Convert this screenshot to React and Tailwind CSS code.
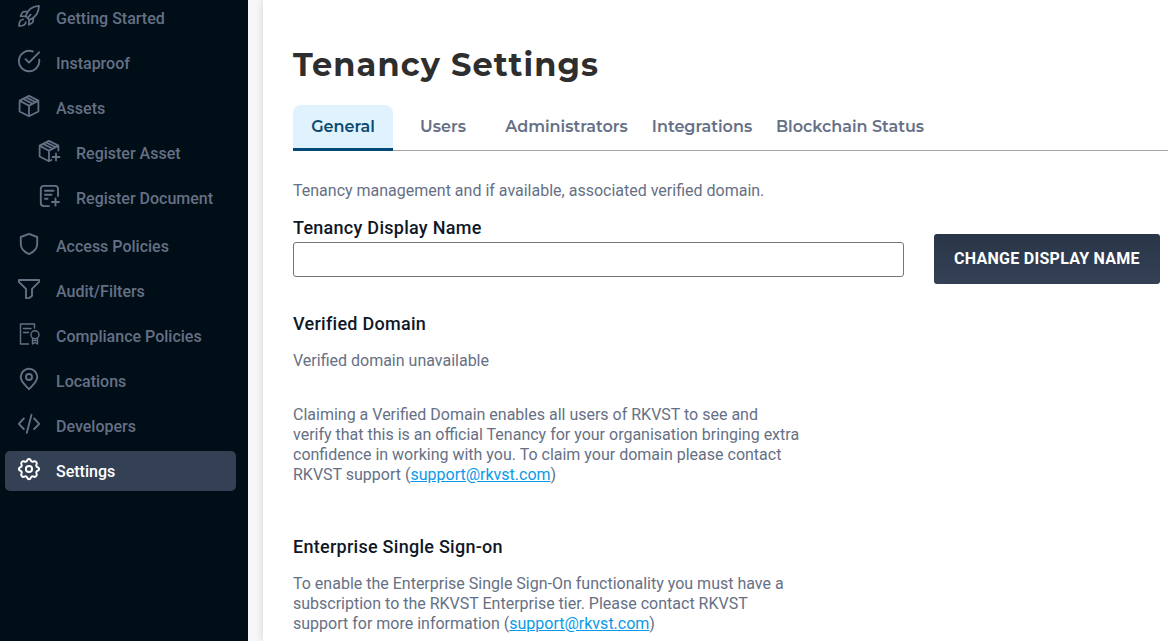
import React from "react";

function Icon({ children, width = "1.9" }) {
  return (
    <svg viewBox="0 0 24 24" className="-mt-1.5 size-6 shrink-0" fill="none" stroke="currentColor" strokeWidth={width} strokeLinecap="round" strokeLinejoin="round">
      {children}
    </svg>
  );
}

const icons = {
  rocket: (
    <Icon width="1.7">
      <path d="M8.6 12.2C10.2 6.8 14.5 2.4 22 1.900c-.3 7.600-4.200 12.100-9.500 13.900z" />
      <path d="M10.500 7.700H7.200c-1 0-1.700.4-2.200 1.300l-1.500 3.200 5.100.2M16.200 13.500v3.300c0 1-.4 1.700-1.300 2.200l-3.100 1.800.4-4.900" />
      <path d="M6.200 15.500c-2.700-.3-4.200 2.500-4.200 6.500 4.100 0 7.100-1.200 6.700-4M10.500 13.800l3.200-3.200" />
    </Icon>
  ),
  check: (
    <Icon>
      <path d="M22 3.300L12 13.600l-3.400-3.400M22.200 10.600A10.200 10.200 0 1 1 15.800 2.500" />
    </Icon>
  ),
  box: (
    <Icon width="1.8">
      <path d="M12 1.900l9.400 4.700v10.900L12 22.200 2.600 17.500V6.600zM2.600 6.600L12 11.700l9.400-5.100M12 11.700v10.500M6.100 4.900l9.500 4.900M9.100 3.400l9.500 4.800" />
    </Icon>
  ),
  boxPlus: (
    <Icon width="1.8">
      <path d="M21.400 11.500V6.600L12 1.900 2.600 6.600v10.900l9.400 4.700 2.400-1.200M2.600 6.600L12 11.700l9.400-5.100M12 11.700v10.500M6.100 4.900l9.500 4.900M9.100 3.400l9.500 4.800M19 14.500v7M15.500 18h7" />
    </Icon>
  ),
  docPlus: (
    <Icon>
      <path d="M21 12V4.900c0-2-1-3-3-3H7c-2 0-3.200 1-3.200 3v14.200c0 2 1.200 3 3.200 3h5M8 6.700h8.500M8 10.700h6.500M8 14.700h2.500M18.500 14.500v7M15 18h7" />
    </Icon>
  ),
  shield: (
    <Icon>
      <path d="M3.800 5L12 1.900 20.200 5v7c0 4.800-3.400 8-8.200 10.100C7.200 20 3.800 16.800 3.800 12z" />
    </Icon>
  ),
  filter: (
    <Icon>
      <path d="M1.900 3h20.200v1.900L15 11.900v6.900l-2.600 2.100-3.400.2v-9.200L1.900 4.900z" />
    </Icon>
  ),
  compliance: (
    <Icon width="1.400">
      <path d="M17.500 6V2h-14v20h8M6.500 6.500h7.500M6.500 10.500h5M15.500 16.800V22l2.500-1.500 2.500 1.500v-5.200M15.500 18.500h5" />
      <circle cx="18" cy="12.800" r="4" />
    </Icon>
  ),
  pin: (
    <Icon>
      <path d="M20.300 10.100c0 4.900-5.300 8.600-8.300 12.100-3-3.500-8.300-7.200-8.300-12.100a8.300 8.300 0 0 1 16.600 0z" />
      <circle cx="12" cy="10" r="3" />
    </Icon>
  ),
  code: (
    <Icon>
      <path d="M6.800 6.500L1.800 11.800l5 5.200M17.200 6.500l5 5.300-5 5.200M14.500 2.800l-4.700 18" />
    </Icon>
  ),
  gear: (
    <Icon width="2">
      <circle cx="12" cy="12" r="3.100" />
      <path d="M10.200 3.400c.7-2 2.900-2 3.600 0 .4 1.200 1.600 1.700 2.700 1.100 1.900-1 4.100 1 3 3.100-.6 1.100-.1 2.300 1.100 2.700 2 .7 2 2.800 0 3.500-1.200.4-1.700 1.600-1.100 2.700 1.100 2-.9 4.100-3 3.100-1.100-.6-2.300-.1-2.700 1.100-.7 2-2.900 2-3.600 0-.4-1.200-1.600-1.700-2.700-1.100-2 1-4.100-1.100-3-3.100.6-1.100.1-2.300-1.100-2.700-2-.7-2-2.800 0-3.500 1.200-.4 1.700-1.600 1.100-2.700-1.100-2.100 1.100-4.100 3-3.100 1.100.6 2.300.1 2.700-1.100z" />
    </Icon>
  ),
};

const nav = [
  { label: "Getting Started", icon: "rocket" },
  { label: "Instaproof", icon: "check" },
  { label: "Assets", icon: "box" },
  { label: "Register Asset", icon: "boxPlus", sub: true },
  { label: "Register Document", icon: "docPlus", sub: true },
  { label: "Access Policies", icon: "shield", gap: true },
  { label: "Audit/Filters", icon: "filter" },
  { label: "Compliance Policies", icon: "compliance" },
  { label: "Locations", icon: "pin" },
  { label: "Developers", icon: "code" },
  { label: "Settings", icon: "gear", active: true },
];

function NavItem({ item }) {
  return (
    <a
      className={`flex h-10 shrink-0 items-center gap-[15px] rounded-[5px] pt-0.5 font-medium ${item.sub ? "pl-8" : "pl-3"} ${item.gap ? "mt-[3px]" : ""} ${item.active ? "bg-[#344054] text-white" : "text-[#667085]"}`}
    >
      {icons[item.icon]}
      <span>{item.label}</span>
    </a>
  );
}

function Sidebar() {
  return (
    <nav className="-mt-0.5 flex w-[248px] shrink-0 flex-col gap-[5px] bg-[#000e18] pr-3 pl-[5px] text-base leading-5">
      {nav.map((item) => (
        <NavItem key={item.label} item={item} />
      ))}
    </nav>
  );
}

const tabs = [
  { label: "General", width: "w-[100px]", active: true },
  { label: "Users", width: "w-[100px]" },
  { label: "Administrators", width: "w-[147px]" },
  { label: "Integrations", width: "w-[124px]" },
  { label: "Blockchain Status", width: "w-[172px]" },
];

function Tabs() {
  return (
    <div className="flex h-[46px] border-b border-[#a3a3a3]">
      {tabs.map((tab) => (
        <button
          key={tab.label}
          className={`flex h-[46px] shrink-0 items-center justify-center border-b-3 font-['Montserrat','Inter',sans-serif] text-base font-semibold whitespace-nowrap ${tab.width} ${tab.active ? "rounded-t-lg border-[#004a75] bg-[#e0f2fe] text-[#0b4a6f]" : "border-transparent text-[#667085]"}`}
        >
          {tab.label}
        </button>
      ))}
    </div>
  );
}

function SupportLink() {
  return <a className="text-[#0b9ae8] underline">support@rkvst.com</a>;
}

export default function App() {
  return (
    <div className="flex h-[641px] w-[1168px] overflow-hidden bg-[#f7f7f9] font-['Roboto',sans-serif] text-base leading-5 text-[#667085]">
      <Sidebar />
      <main className="ml-[15px] flex min-w-0 flex-1 flex-col bg-white pl-[30px] shadow-[0_0_8px_rgba(0,0,0,0.15)]">
        <h1 className="mt-[45px] h-10 font-['Montserrat','Inter',sans-serif] text-[32px] leading-10 font-bold tracking-[1.08px] whitespace-nowrap text-[#2e2e2e]">
          Tenancy Settings
        </h1>
        <div className="mt-5">
          <Tabs />
        </div>
        <p className="mt-[30px]">Tenancy management and if available, associated verified domain.</p>
        <div className="mt-4 flex gap-[30px]">
          <label className="flex flex-col">
            <span className="h-[25px] text-lg leading-[21px] font-medium tracking-[0.27px] text-[#101828]">Tenancy Display Name</span>
            <input className="h-[35px] w-[611px] rounded-[3px] border border-[#767676] bg-white px-2 outline-none" />
          </label>
          <button className="mt-[17px] h-[50px] w-[226px] rounded-[3px] bg-linear-to-b from-[#293648] to-[#344054] font-bold tracking-[0.27px] whitespace-nowrap text-white">
            CHANGE DISPLAY NAME
          </button>
        </div>
        <h2 className="mt-[30px] text-lg leading-5 font-medium tracking-[0.27px] text-[#101828]">Verified Domain</h2>
        <p className="mt-[17px]">Verified domain unavailable</p>
        <p className="mt-[34px]">
          Claiming a Verified Domain enables all users of RKVST to see and<br />
          verify that this is an official Tenancy for your organisation bringing extra<br />
          confidence in working with you. To claim your domain please contact<br />
          RKVST support (<SupportLink />)
        </p>
        <h2 className="mt-[52px] text-lg leading-5 font-medium tracking-[0.27px] text-[#101828]">Enterprise Single Sign-on</h2>
        <p className="mt-[17px]">
          To enable the Enterprise Single Sign-On functionality you must have a<br />
          subscription to the RKVST Enterprise tier. Please contact RKVST<br />
          support for more information (<SupportLink />)
        </p>
      </main>
    </div>
  );
}
